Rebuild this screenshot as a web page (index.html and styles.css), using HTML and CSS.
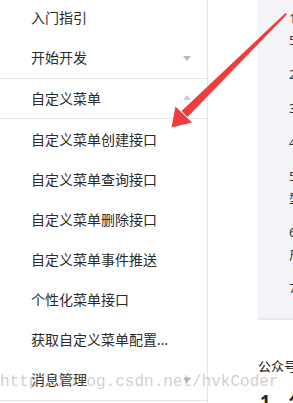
FILE: index.html
```html
<!DOCTYPE html>
<html lang="zh">
<head>
<meta charset="utf-8">
<link rel="stylesheet" href="styles.css">
</head>
<body>
<div class="page">
  <nav class="sidebar">
    <div class="item first">入门指引</div>
    <div class="item has-arrow">开始开发<span class="tri down"></span></div>
    <div class="divider"></div>
    <div class="item open has-arrow">自定义菜单<span class="tri up"></span></div>
    <div class="divider"></div>
    <div class="sublist">
      <div class="item">自定义菜单创建接口</div>
      <div class="item">自定义菜单查询接口</div>
      <div class="item">自定义菜单删除接口</div>
      <div class="item">自定义菜单事件推送</div>
      <div class="item">个性化菜单接口</div>
      <div class="item">获取自定义菜单配置接口</div>
    </div>
    <div class="item has-arrow">消息管理<span class="tri down"></span></div>
    <div class="divider"></div>
  </nav>
  <main class="main">
    <div class="panel">
      <div class="note">1、自定义菜单最多包括3个一级菜单，每个一级菜单最多包含5个二级菜单。</div>
      <div class="note">2、一级菜单最多4个汉字。</div>
      <div class="note">3、二级菜单最多7个汉字。</div>
      <div class="note">4、创建自定义菜单后，菜单的刷新策略。</div>
      <div class="note">5、自定义菜单接口可实现多种类型按钮，如下所示的这些类型。</div>
      <div class="note">6、请注意，以下所有事件，仅支持微信5.4.1以上版本的用户。</div>
      <div class="note">7、接口说明</div>
    </div>
    <p class="intro">公众号的自定义菜单</p>
    <h3 class="heading">1、公众号菜单</h3>
  </main>
</div>
<div class="watermark">http://blog.csdn.net/hvkCoder</div>
<svg class="arrow" width="293" height="403" viewBox="0 0 293 403">
  <polygon points="285.5,13 286.8,14.6 187.5,117 181.5,111" fill="#f03c3c"/>
  <polygon points="171.5,127.5 175.5,106.5 192,122.5" fill="#f03c3c"/>
</svg>
</body>
</html>
```
FILE: styles.css
```css
html, body {
  margin: 0;
  padding: 0;
  background: #fff;
  overflow: hidden;
}
body {
  width: 293px;
  height: 403px;
  position: relative;
  font-family: "Noto Sans", "Noto Sans CJK SC", sans-serif;
}
.page {
  display: flex;
  width: 293px;
  height: 403px;
  overflow: hidden;
}
.sidebar {
  flex: 0 0 207px;
  width: 207px;
  border-right: 1px solid #e6e6e6;
  display: flex;
  flex-direction: column;
}
.item {
  height: 40px;
  line-height: 40px;
  padding-left: 31px;
  font-size: 14px;
  color: #2b2b2b;
  white-space: nowrap;
  overflow: hidden;
  text-overflow: ellipsis;
  position: relative;
  flex: 0 0 auto;
  padding-right: 24px;
}
.item.first {
  height: 38px;
  line-height: 36px;
}
.item.open {
  height: 39px;
  line-height: 39px;
}
.sublist {
  padding-top: 1px;
  display: flex;
  flex-direction: column;
}
.sublist .item {
  padding-right: 36px;
}
.divider {
  height: 1px;
  background: #e6e6e6;
  flex: 0 0 1px;
}
.tri {
  position: absolute;
  right: 16px;
  top: 50%;
  width: 0;
  height: 0;
  border-left: 4.5px solid transparent;
  border-right: 4.5px solid transparent;
}
.tri.down {
  border-top: 5px solid #b6bac2;
  margin-top: -2px;
}
.tri.up {
  border-bottom: 5px solid #c9ccd3;
  margin-top: -4px;
}
.main {
  flex: 0 0 auto;
  width: 460px;
  padding-left: 50px;
}
.panel {
  background: #f3f4f8;
  height: 311px;
  border-bottom: 2px solid #e8e9ee;
  padding: 7px 0 0 31px;
}
.note {
  font-size: 13px;
  line-height: 22px;
  color: #333;
  width: 360px;
  margin-bottom: 12px;
}
.intro {
  margin: 36px 0 0;
  font-size: 13px;
  line-height: 20px;
  color: #222;
  white-space: nowrap;
}
.heading {
  margin: 13px 0 0;
  font-size: 18px;
  line-height: 24px;
  font-weight: bold;
  color: #222;
  white-space: nowrap;
  padding-left: 2px;
}
.watermark {
  position: absolute;
  left: 0;
  top: 372px;
  font-family: "Liberation Mono", "DejaVu Sans Mono", monospace;
  font-size: 16px;
  line-height: 20px;
  color: rgba(160, 160, 160, 0.5);
  white-space: nowrap;
  pointer-events: none;
}
.arrow {
  position: absolute;
  left: 0;
  top: 0;
  pointer-events: none;
}
```
